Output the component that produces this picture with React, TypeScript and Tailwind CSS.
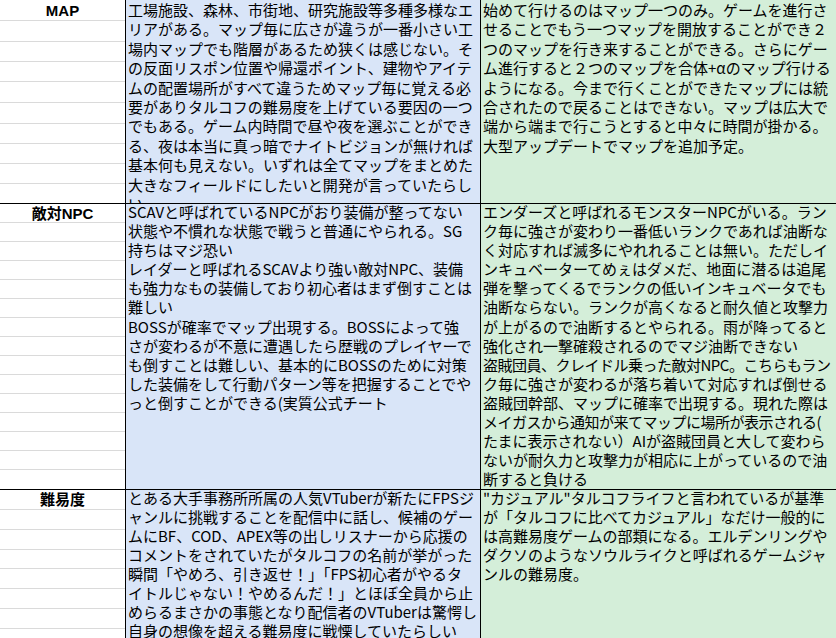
const rows = [
  {
    label: "MAP",
    height: "h-[204px]",
    line: "h-[19.4px] leading-[19.4px]",
    shift: "",
    sub: ["h-[21px]", "h-[21px]", "h-[20px]", "h-[20px]", "h-[21px]", "h-[21px]", "h-[20px]", "h-[20px]", "h-[20px]"],
    left: [
      "工場施設、森林、市街地、研究施設等多種多様なエ",
      "リアがある。マップ毎に広さが違うが一番小さい工",
      "場内マップでも階層があるため狭くは感じない。そ",
      "の反面リスポン位置や帰還ポイント、建物やアイテ",
      "ムの配置場所がすべて違うためマップ毎に覚える必",
      "要がありタルコフの難易度を上げている要因の一つ",
      "でもある。ゲーム内時間で昼や夜を選ぶことができ",
      "る、夜は本当に真っ暗でナイトビジョンが無ければ",
      "基本何も見えない。いずれは全てマップをまとめた",
      "大きなフィールドにしたいと開発が言っていたらし",
      "い",
    ],
    right: [
      "始めて行けるのはマップ一つのみ。ゲームを進行さ",
      "せることでもう一つマップを開放することができ２",
      "つのマップを行き来することができる。さらにゲー",
      "ム進行すると２つのマップを合体+αのマップ行ける",
      "ようになる。今まで行くことができたマップには統",
      "合されたので戻ることはできない。マップは広大で",
      "端から端まで行こうとすると中々に時間が掛かる。",
      "大型アップデートでマップを追加予定。",
    ],
  },
  {
    label: "敵対NPC",
    height: "h-[286px]",
    line: "h-[19.1px] leading-[19.1px]",
    shift: "-mt-[2px]",
    sub: Array(14).fill("h-[19px]"),
    left: [
      "SCAVと呼ばれているNPCがおり装備が整ってない",
      "状態や不慣れな状態で戦うと普通にやられる。SG",
      "持ちはマジ恐い",
      "レイダーと呼ばれるSCAVより強い敵対NPC、装備",
      "も強力なもの装備しており初心者はまず倒すことは",
      "難しい",
      "BOSSが確率でマップ出現する。BOSSによって強",
      "さが変わるが不意に遭遇したら歴戦のプレイヤーで",
      "も倒すことは難しい、基本的にBOSSのために対策",
      "した装備をして行動パターン等を把握することでや",
      "っと倒すことができる(実質公式チート",
    ],
    right: [
      "エンダーズと呼ばれるモンスターNPCがいる。ラン",
      "ク毎に強さが変わり一番低いランクであれば油断な",
      "く対応すれば滅多にやれれることは無い。ただしイ",
      "ンキュベーターてめぇはダメだ、地面に潜るは追尾",
      "弾を撃ってくるでランクの低いインキュベータでも",
      "油断ならない。ランクが高くなると耐久値と攻撃力",
      "が上がるので油断するとやられる。雨が降ってると",
      "強化され一撃確殺されるのでマジ油断できない",
      "盗賊団員、クレイドル乗った敵対NPC。こちらもラン",
      "ク毎に強さが変わるが落ち着いて対応すれば倒せる",
      "盗賊団幹部、マップに確率で出現する。現れた際は",
      "メイガスから通知が来てマップに場所が表示される(",
      "たまに表示されない）AIが盗賊団員と大して変わら",
      "ないが耐久力と攻撃力が相応に上がっているので油",
      "断すると負ける",
    ],
  },
  {
    label: "難易度",
    height: "h-[200px]",
    line: "h-[19px] leading-[19px]",
    shift: "-mt-[2px]",
    sub: ["h-[20px]", "h-[20px]", "h-[20px]", "h-[19px]", "h-[20px]", "h-[20px]", "h-[20px]", "h-[20px]"],
    left: [
      "とある大手事務所所属の人気VTuberが新たにFPSジ",
      "ャンルに挑戦することを配信中に話し、候補のゲー",
      "ムにBF、COD、APEX等の出しリスナーから応援の",
      "コメントをされていたがタルコフの名前が挙がった",
      "瞬間「やめろ、引き返せ！」「FPS初心者がやるタ",
      "イトルじゃない！やめるんだ！」とほぼ全員から止",
      "めらるまさかの事態となり配信者のVTuberは驚愕し",
      "自身の想像を超える難易度に戦慄していたらしい",
    ],
    right: [
      "\"カジュアル\"タルコフライフと言われているが基準",
      "が「タルコフに比べてカジュアル」なだけ一般的に",
      "は高難易度ゲームの部類になる。エルデンリングや",
      "ダクソのようなソウルライクと呼ばれるゲームジャ",
      "ンルの難易度。",
    ],
  },
];

// lines that are a touch too long for the cell in this font
const tight = new Set([
  "盗賊団員、クレイドル乗った敵対NPC。こちらもラン",
  "メイガスから通知が来てマップに場所が表示される(",
]);

function Lines({ lines, line, shift }: { lines: string[]; line: string; shift: string }) {
  return (
    <div className={shift}>
      {lines.map((l, i) => (
        <div
          key={i}
          className={`${line} whitespace-nowrap overflow-hidden ${tight.has(l) ? "tracking-[-0.5px]" : ""}`}
        >
          {l}
        </div>
      ))}
    </div>
  );
}

export default function App() {
  return (
    <div className="w-[836px] h-[638px] overflow-hidden bg-white text-black">
      {rows.map((r) => (
        <div key={r.label} className={`flex shrink-0 border-b border-black ${r.height}`}>
          {/* label column with light grid rows */}
          <div className="w-[126px] shrink-0 flex flex-col border-r border-black">
            {r.sub.map((h: string, i: number) => (
              <div key={i} className={`${h} shrink-0 border-b border-[#dadada] flex items-center justify-center`}>
                {i === 0 && (
                  <span
                    className="text-[15px] font-bold leading-none"
                    style={{ fontFamily: '"Liberation Sans", "Noto Sans CJK JP", sans-serif' }}
                  >
                    {r.label}
                  </span>
                )}
              </div>
            ))}
            <div className="flex-1" />
          </div>
          <div
            className="w-[355px] shrink-0 bg-[#d9e5f8] border-r border-black pl-[2px] overflow-hidden text-[15px]"
            style={{ fontFamily: '"Noto Sans CJK JP", sans-serif' }}
          >
            <Lines lines={r.left} line={r.line} shift={r.shift} />
          </div>
          <div
            className="flex-1 bg-[#d4eed9] pl-[2px] overflow-hidden text-[15px]"
            style={{ fontFamily: '"Noto Sans CJK JP", sans-serif' }}
          >
            <Lines lines={r.right} line={r.line} shift={r.shift} />
          </div>
        </div>
      ))}
    </div>
  );
}
